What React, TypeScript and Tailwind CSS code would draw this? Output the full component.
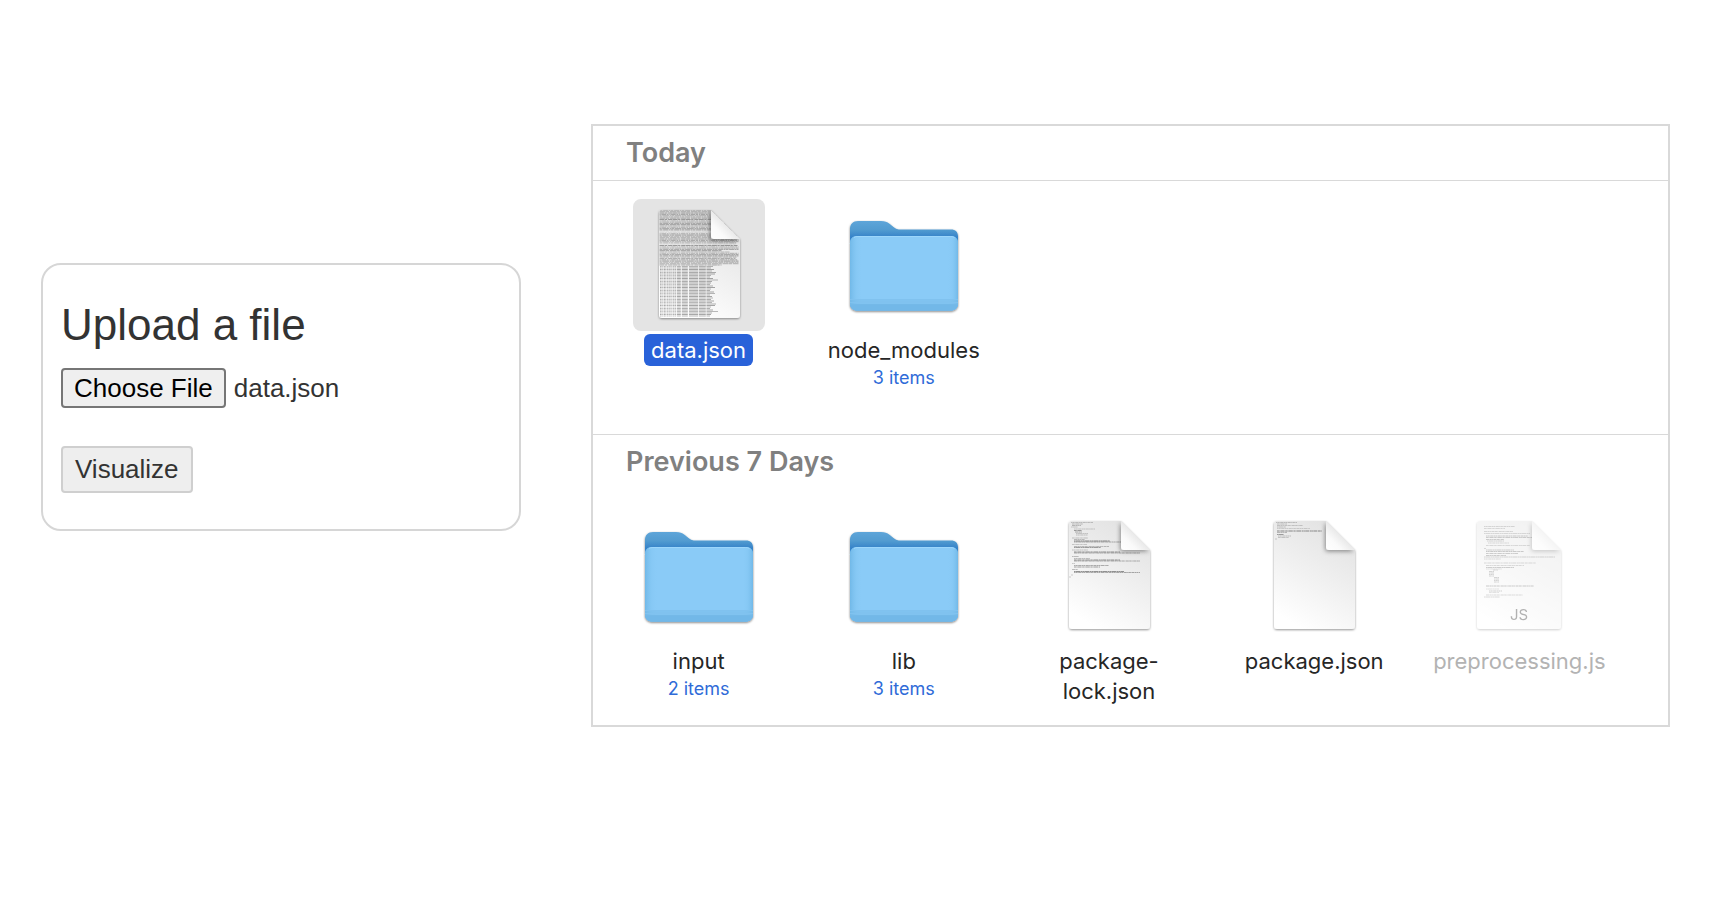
import { useEffect, useRef } from "react";
import type { ReactNode } from "react";

type Line = { x: number; y: number; w: number; o: number; dash: string };

// Each entry: [y, indent, width, opacity]
type Row = [number, number, number, number];

const DASHES = ["1.4 0.3 2 0.5 3 0.4", "2 0.3 1 0.3 4 0.6", "3 0.4 2.2 0.3 1 0.5", "1 0.3 5 0.4 2 0.3"];

function toLines(rows: Row[]): Line[] {
  return rows.map(([y, x, w, o], i) => ({ x, y, w, o, dash: DASHES[i % DASHES.length] }));
}

const LOCK_ROWS: Row[] = [
  [12.5, 28, 22, 0.35], [14, 29, 11, 0.4], [15.5, 29, 9, 0.4], [17, 28, 7, 0.3],
  [19, 31, 21, 0.3], [20.5, 31, 8, 0.6], [22, 32, 7, 0.5], [23.5, 33, 12, 0.3], [25, 33, 12, 0.35],
  [28, 29, 16, 0.35], [29.5, 31, 11, 0.4], [31, 31, 36, 0.75], [32, 31, 47, 0.5],
  [34.5, 29, 15, 0.3], [36.5, 31, 35, 0.4], [37.5, 31, 27, 0.6],
  [40, 29, 16, 0.35], [42, 31, 46, 0.7], [43, 31, 66, 0.5],
  [46.5, 29, 7, 0.4], [48.5, 31, 16, 0.4], [50, 31, 46, 0.7], [51, 31, 66, 0.5],
  [53.5, 29, 3, 0.3], [55.5, 31, 35, 0.5], [57, 31, 26, 0.6],
  [59.5, 29, 6, 0.4], [61.5, 31, 50, 0.7], [62.5, 31, 66, 0.55], [65, 28, 2, 0.3], [67, 26, 2, 0.3],
];

const PACKAGE_ROWS: Row[] = [
  [12.5, 28, 21, 0.35], [14, 29, 10, 0.35], [15.5, 29, 26, 0.3], [17, 29, 9, 0.35],
  [18.5, 29, 33, 0.25], [21, 29, 45, 0.75], [22.5, 29, 10, 0.4], [24.5, 29, 7, 0.6],
  [26, 30, 13, 0.35], [27.5, 30, 11, 0.3], [29, 27, 2, 0.3],
];

const SCRIPT_ROWS: Row[] = [
  [16.5, 31, 31, 0.55], [18.5, 31, 21, 0.5], [21.5, 31, 29, 0.55], [23.5, 31, 46, 0.5],
  [26, 33, 42, 0.75], [27.5, 33, 46, 0.7], [29.5, 33, 18, 0.7], [31, 34, 17, 0.6], [33, 35, 21, 0.5],
  [35.5, 33, 44, 0.5], [38.5, 31, 2, 0.5], [40, 33, 28, 0.7], [41.5, 33, 38, 0.75],
  [43.5, 33, 32, 0.7], [45.5, 33, 20, 0.7], [47, 31, 71, 0.6], [49, 31, 17, 0.5],
  [53, 31, 52, 0.5], [55.5, 33, 38, 0.5], [57.5, 33, 28, 0.7], [59, 33, 16, 0.4],
  [60, 40, 5, 0.6], [61.5, 36, 5, 0.6], [63, 36, 5, 0.6], [64.5, 36, 5, 0.6], [66, 36, 5, 0.6],
  [67.5, 41, 5, 0.6], [69, 41, 5, 0.6], [70.5, 41, 5, 0.6], [72, 41, 5, 0.6],
  [76, 33, 48, 0.75], [79, 33, 13, 0.4], [81, 36, 13, 0.65], [82.5, 36, 10, 0.4],
  [85, 33, 37, 0.5], [87, 31, 16, 0.5],
];

const RAGGED = [55, 53, 56, 54, 58, 57, 53, 52, 55, 60, 54, 53, 52, 55, 57, 53, 52, 56, 57, 52, 54];
const DENSE_WIDTHS = [79, 79, 78, 79, 70, 79, 76, 79, 62, 79, 77];

const DATA_LINES: Line[] = [
  ...Array.from({ length: 43 }, (_, i) => ({
    x: 26.5,
    y: 11.4 + i * 1.3,
    w: DENSE_WIDTHS[(i * 7) % DENSE_WIDTHS.length],
    o: i === 16 || i === 17 || i === 26 ? 0.14 : 0.4 + ((i * 5) % 4) * 0.07,
    dash: [
      "3 0.6 5.3 0.5 1.2 0.4",
      "5 0.5 2.3 0.8 4.1 0.4",
      "2.2 0.5 7 0.6 1.7 0.3",
      "6 0.4 3.4 0.7",
      "1.3 0.5 4.7 0.6 2 0.7",
    ][(i * 3) % 5],
  })),
  ...Array.from({ length: 34 }, (_, i) => ({
    x: 27,
    y: 67.5 + i * 1.5,
    w: RAGGED[i % RAGGED.length] - 2,
    o: 0.46 + (i % 3) * 0.06,
    dash: "1.6 0.7 1 0.6 1.8 0.9 1.3 0.6 1.3 0.6 1.3 0.9 1.3 0.6 1.4 0.9 4 1 6 1.2 9 0.8 7 0.7 14",
  })),
];

const LOCK_LINES = toLines(LOCK_ROWS);
const PACKAGE_LINES = toLines(PACKAGE_ROWS);
const SCRIPT_LINES = toLines(SCRIPT_ROWS);

function FolderIcon() {
  return (
    <svg viewBox="0 0 132 132" className="size-33" aria-hidden="true">
      <defs>
        <linearGradient id="folder-back" x1="0" y1="0" x2="0" y2="1">
          <stop offset="0" stopColor="#5ea5d9" />
          <stop offset="0.1" stopColor="#529bd0" />
          <stop offset="0.18" stopColor="#3583c9" />
          <stop offset="1" stopColor="#3583c9" />
        </linearGradient>
        <linearGradient id="folder-side" x1="0" y1="0" x2="1" y2="0">
          <stop offset="0" stopColor="#6bb4e4" stopOpacity="0.8" />
          <stop offset="0.06" stopColor="#7cc1ee" stopOpacity="0.3" />
          <stop offset="0.12" stopColor="#8acbf7" stopOpacity="0" />
          <stop offset="0.9" stopColor="#8acbf7" stopOpacity="0" />
          <stop offset="0.95" stopColor="#7cc1ee" stopOpacity="0.3" />
          <stop offset="1" stopColor="#6bb4e4" stopOpacity="0.8" />
        </linearGradient>
        <filter id="folder-shadow" x="-10%" y="-10%" width="120%" height="125%">
          <feDropShadow dx="0" dy="1" stdDeviation="1" floodColor="#000" floodOpacity="0.5" />
        </filter>
      </defs>
      <g filter="url(#folder-shadow)">
        <path
          d="M12 30c0-5 3-8 8-8h23c4 0 6 .8 8.500 2.800l4 3.200c2.500 2 4 2.500 7.500 2.500H113c4.500 0 7 2.500 7 7V104c0 5-3 7.500-7.500 7.500H19.500c-4.500 0-7.500-2.500-7.500-7.500z"
          fill="url(#folder-back)"
        />
        <path
          d="M12 44.500c0-5 2.500-7.500 7.500-7.500h93c5 0 7.500 2.500 7.500 7.500V104c0 5-3 7.500-7.500 7.500H19.500c-4.500 0-7.500-2.500-7.500-7.500z"
          fill="#8acbf7"
        />
      </g>
      <path
        d="M12 44.500c0-5 2.500-7.500 7.500-7.500h93c5 0 7.500 2.500 7.500 7.500V104c0 5-3 7.500-7.500 7.500H19.500c-4.500 0-7.500-2.500-7.500-7.500z"
        fill="url(#folder-side)"
      />
      <path d="M16 38.500Q17.500 37.500 20 37.500H112.500Q115 37.500 116.500 38.500" fill="none" stroke="#9cd6fb" />
      <path d="M12 105H120Q119.500 111.500 112.500 111.500H19.500Q12.500 111.500 12 105z" fill="#72b8e8" />
      <path d="M12 100.500H120M12 103.500H120" stroke="#80c2ef" />
      <path d="M12 102H120M12 105H120" stroke="#76bae8" />
    </svg>
  );
}

function DocumentIcon({ id, lines, badge }: { id: string; lines: Line[]; badge?: string }) {
  const shape = badge
    ? "M29 11H79L108 40V116Q108 119 105 119H27Q24 119 24 116V14Q24 11 27 11z"
    : "M29 11H78L107 40V116Q107 119 104 119H29Q26 119 26 116V14Q26 11 29 11z";
  const fold = badge ? "M79 11L108 40H82Q79 40 79 37z" : "M78 11L107 40H81Q78 40 78 37z";
  return (
    <svg viewBox="0 0 132 132" className="size-33" aria-hidden="true">
      <defs>
        <linearGradient id={`${id}-paper`} x1="0.75" y1="0.1" x2="0.35" y2="1">
          <stop offset="0" stopColor="#e4e4e4" />
          <stop offset="0.5" stopColor="#f1f1f1" />
          <stop offset="1" stopColor="#ffffff" />
        </linearGradient>
        <linearGradient id={`${id}-fold`} x1="0" y1="1" x2="0.55" y2="0.45">
          <stop offset="0" stopColor="#ffffff" />
          <stop offset="0.5" stopColor="#fafafa" />
          <stop offset="1" stopColor="#e6e6e6" />
        </linearGradient>
        <filter id={`${id}-shadow`} x="-10%" y="-10%" width="120%" height="120%">
          <feDropShadow dx="0" dy="1" stdDeviation="1.200" floodColor="#000" floodOpacity="0.42" />
        </filter>
        <filter id={`${id}-crease`} x="-30%" y="-30%" width="160%" height="160%">
          <feDropShadow dx="-1" dy="1.500" stdDeviation="2" floodColor="#000" floodOpacity="0.4" />
        </filter>
        <clipPath id={`${id}-clip`}>
          <path d={shape} />
        </clipPath>
      </defs>
      <path d={shape} fill={`url(#${id}-paper)`} filter={`url(#${id}-shadow)`} />
      <g clipPath={`url(#${id}-clip)`}>
        {lines.map((l, i) => (
          <path
            key={i}
            d={`M${l.x} ${l.y}h${l.w}`}
            stroke="#444"
            strokeWidth="0.8"
            strokeOpacity={l.o}
            strokeDasharray={l.dash}
          />
        ))}
        <path d={fold} fill={`url(#${id}-fold)`} filter={`url(#${id}-crease)`} />
      </g>
      {badge && (
        <text x="66" y="110" textAnchor="middle" fontSize="15" fontFamily="Inter, sans-serif" fill="#555">
          {badge}
        </text>
      )}
    </svg>
  );
}

type FileProps = {
  name: ReactNode;
  icon: ReactNode;
  items?: string;
  selected?: boolean;
  disabled?: boolean;
};

function FileTile({ name, icon, items, selected, disabled }: FileProps) {
  return (
    <li className="flex flex-col items-center text-center">
      <div className={`rounded-lg ${selected ? "bg-[#e4e4e4]" : ""} ${disabled ? "opacity-45" : ""}`}>{icon}</div>
      <span
        className={`mt-[3px] rounded-md px-[7px] py-px text-[22px] leading-[30px] ${
          selected ? "bg-[#2962d9] text-white" : disabled ? "text-[#b3b3b3]" : "text-[#262626]"
        }`}
      >
        {name}
      </span>
      {items && <span className="text-[18px] leading-6 text-[#2f6bd8]">{items}</span>}
    </li>
  );
}

function UploadCard() {
  const input = useRef<HTMLInputElement>(null);

  useEffect(() => {
    if (!input.current) return;
    const transfer = new DataTransfer();
    transfer.items.add(new File(["{}"], "data.json", { type: "application/json" }));
    input.current.files = transfer.files;
  }, []);

  return (
    <form
      className="mt-[139px] w-[480px] shrink-0 rounded-[20px] border-2 border-[#d6d6d6] px-[18px] pt-[35px] pb-9 font-['Liberation_Sans',Arial,sans-serif] text-[#333]"
      onSubmit={(e) => e.preventDefault()}
    >
      <label htmlFor="upload" className="block text-[44px] leading-[50px]">
        Upload a file
      </label>
      <input
        ref={input}
        id="upload"
        type="file"
        className="mt-[18px] block h-10 w-full text-[26px] leading-9 file:mr-2 file:h-10 file:rounded-[4px] file:border-2 file:border-solid file:border-[#767676] file:bg-[#efefef] file:px-[11px] file:text-black"
      />
      <button
        type="submit"
        className="mt-[38px] block rounded-[4px] border-2 border-[#cfcfcf] bg-[#eee] px-3 py-1 text-[26px] leading-[35px]"
      >
        Visualize
      </button>
    </form>
  );
}

export default function App() {
  return (
    <main className="flex min-h-screen items-start gap-[70px] bg-white pt-[124px] pr-[52px] pl-[41px]">
      <UploadCard />
      <div className="min-w-0 flex-1 border-2 border-[#d9d9d9] font-['Inter',sans-serif]">
        <section>
          <h2 className="border-b border-[#d9d9d9] py-2.5 pl-[33px] text-[27px] leading-[34px] font-semibold text-[#808080]">
            Today
          </h2>
          <ul className="grid grid-cols-5 pt-[18px] pr-[46px] pb-11 pl-[3px]">
            <FileTile selected name="data.json" icon={<DocumentIcon id="data" lines={DATA_LINES} />} />
            <FileTile name="node_modules" items="3 items" icon={<FolderIcon />} />
          </ul>
        </section>
        <section className="border-t border-[#d9d9d9]">
          <h2 className="py-2.5 pl-[33px] text-[27px] leading-[34px] font-semibold text-[#808080]">
            Previous 7 Days
          </h2>
          <ul className="grid grid-cols-5 pt-[21px] pr-[46px] pb-[18px] pl-[3px]">
            <FileTile name="input" items="2 items" icon={<FolderIcon />} />
            <FileTile name="lib" items="3 items" icon={<FolderIcon />} />
            <FileTile
              name={
                <>
                  package-
                  <br />
                  lock.json
                </>
              }
              icon={<DocumentIcon id="lock" lines={LOCK_LINES} />}
            />
            <FileTile name="package.json" icon={<DocumentIcon id="package" lines={PACKAGE_LINES} />} />
            <FileTile
              disabled
              name="preprocessing.js"
              icon={<DocumentIcon id="script" lines={SCRIPT_LINES} badge="JS" />}
            />
          </ul>
        </section>
      </div>
    </main>
  );
}
